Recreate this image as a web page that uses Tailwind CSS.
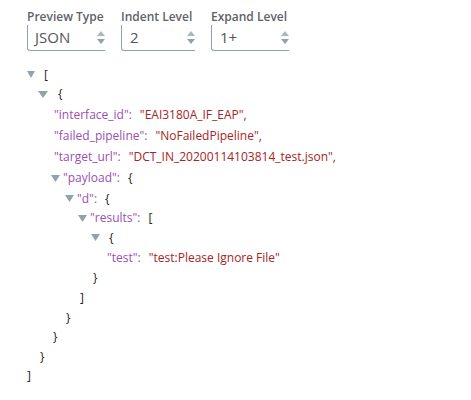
<!DOCTYPE html>
<html lang="en">
<head>
    <meta charset="utf-8"/>
    <title>Preview</title>
    <script src="https://cdn.jsdelivr.net/npm/@tailwindcss/browser@4"></script>
</head>
<body class="h-[400px] w-[471px] overflow-hidden bg-white font-['Open_Sans',sans-serif] text-[12px] text-[#333]">
    <div class="flex pl-[27px] pt-[9px]">
        <div class="w-[94px]">
            <div class="h-[15px] text-[12px] leading-[15px] font-semibold text-[#5f6368]">Preview Type</div>
            <div class="mt-[1px] flex h-[26px] w-[78px] items-center justify-between rounded-bl-[3px] border-b border-l border-[#8fa3ad] pl-[7px] text-[15px] text-[#555]">
                <span>JSON</span>
                <svg width="8" height="15" viewBox="0 0 8 15"><path d="M4 1 8 6H0z" fill="#a9b8bd"/><path d="M0 9h8l-4 5z" fill="#8fa3ad"/></svg>
            </div>
        </div>
        <div class="w-[90px]">
            <div class="h-[15px] text-[12px] leading-[15px] font-semibold text-[#5f6368]">Indent Level</div>
            <div class="mt-[1px] flex h-[26px] w-[74px] items-center justify-between rounded-bl-[3px] border-b border-l border-[#8fa3ad] pl-[8px] text-[15px] text-[#555]">
                <span>2</span>
                <svg width="8" height="15" viewBox="0 0 8 15"><path d="M4 1 8 6H0z" fill="#a9b8bd"/><path d="M0 9h8l-4 5z" fill="#8fa3ad"/></svg>
            </div>
        </div>
        <div class="w-[78px]">
            <div class="h-[15px] text-[12px] leading-[15px] font-semibold text-[#5f6368]">Expand Level</div>
            <div class="mt-[1px] flex h-[26px] w-[78px] items-center justify-between rounded-bl-[3px] border-b border-l border-[#8fa3ad] pl-[8px] text-[15px] text-[#555]">
                <span>1+</span>
                <svg width="8" height="15" viewBox="0 0 8 15"><path d="M4 1 8 6H0z" fill="#a9b8bd"/><path d="M0 9h8l-4 5z" fill="#8fa3ad"/></svg>
            </div>
        </div>
    </div>

    <div class="mt-[14px] flex flex-col">
        <div class="flex h-[19px] items-center pl-[27px]"><svg class="mr-[9px]" width="8" height="7" viewBox="0 0 8 7"><path d="M0 0h8L4 7z" fill="#8fa3ad"/></svg><span class="text-[#222]">[</span></div>
        <div class="flex h-[20px] items-center pl-[38px]"><svg class="mr-[10px]" width="10" height="7" viewBox="0 0 10 7"><path d="M0 0h10L5 7z" fill="#8fa3ad"/></svg><span class="text-[#222]">{</span></div>
        <div class="flex h-[21px] items-center pl-[54px]"><span class="text-[#9b4fb0]">"interface_id":</span><span class="ml-[8px] text-[#a52424]">"EAI3180A_IF_EAP",</span></div>
        <div class="flex h-[21px] items-center pl-[54px]"><span class="text-[#9b4fb0]">"failed_pipeline":</span><span class="ml-[8px] text-[#a52424]">"NoFailedPipeline",</span></div>
        <div class="flex h-[21px] items-center pl-[54px]"><span class="text-[#9b4fb0]">"target_url":</span><span class="ml-[8px] text-[#a52424]">"DCT_IN_20200114103814_test.json",</span></div>
        <div class="flex h-[22px] items-center pl-[51px]"><svg class="mr-[3px]" width="9" height="7" viewBox="0 0 9 7"><path d="M0 0h9L4.500 7z" fill="#8fa3ad"/></svg><span class="text-[#9b4fb0]">"payload":</span><span class="ml-[8px] text-[#222]">{</span></div>
        <div class="flex h-[19px] items-center pl-[65px]"><svg class="mr-[3px]" width="9" height="7" viewBox="0 0 9 7"><path d="M0 0h9L4.500 7z" fill="#8fa3ad"/></svg><span class="text-[#9b4fb0]">"d":</span><span class="ml-[8px] text-[#222]">{</span></div>
        <div class="flex h-[20px] items-center pl-[78px]"><svg class="mr-[3px]" width="9" height="7" viewBox="0 0 9 7"><path d="M0 0h9L4.500 7z" fill="#8fa3ad"/></svg><span class="text-[#9b4fb0]">"results":</span><span class="ml-[8px] text-[#222]">[</span></div>
        <div class="flex h-[19px] items-center pl-[91px]"><svg class="mr-[9px]" width="9" height="7" viewBox="0 0 9 7"><path d="M0 0h9L4.500 7z" fill="#8fa3ad"/></svg><span class="text-[#222]">{</span></div>
        <div class="flex h-[21px] items-center pl-[107px]"><span class="text-[#9b4fb0]">"test":</span><span class="ml-[8px] text-[#a52424]">"test:Please Ignore File"</span></div>
        <div class="flex h-[20px] items-center pl-[93px] text-[#222]">}</div>
        <div class="flex h-[20px] items-center pl-[80px] text-[#222]">]</div>
        <div class="flex h-[19px] items-center pl-[66px] text-[#222]">}</div>
        <div class="flex h-[20px] items-center pl-[53px] text-[#222]">}</div>
        <div class="flex h-[19px] items-center pl-[40px] text-[#222]">}</div>
        <div class="flex h-[20px] items-center pl-[27px] text-[#222]">]</div>
    </div>
</body>
</html>
